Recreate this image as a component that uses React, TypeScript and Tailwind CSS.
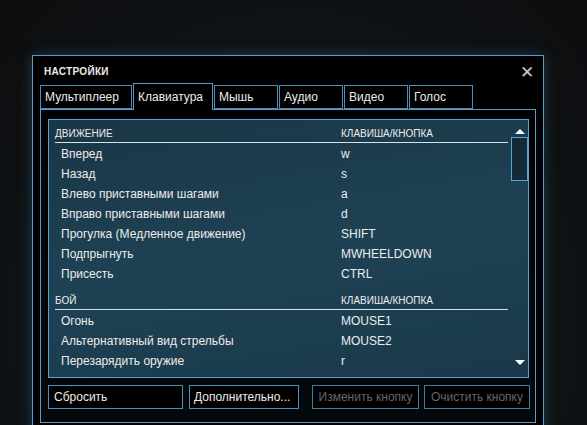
import React from 'react';

const tabs = [
  { label: 'Мультиплеер', w: 'w-[92px]' },
  { label: 'Клавиатура', w: 'w-[80px]', active: true },
  { label: 'Мышь', w: 'w-[64px]' },
  { label: 'Аудио', w: 'w-[64px]' },
  { label: 'Видео', w: 'w-[64px]' },
  { label: 'Голос', w: 'w-[64px]' },
];

const sections = [
  {
    title: 'ДВИЖЕНИЕ',
    rows: [
      ['Вперед', 'w'],
      ['Назад', 's'],
      ['Влево приставными шагами', 'a'],
      ['Вправо приставными шагами', 'd'],
      ['Прогулка (Медленное движение)', 'SHIFT'],
      ['Подпрыгнуть', 'MWHEELDOWN'],
      ['Присесть', 'CTRL'],
    ],
  },
  {
    title: 'БОЙ',
    rows: [
      ['Огонь', 'MOUSE1'],
      ['Альтернативный вид стрельбы', 'MOUSE2'],
      ['Перезарядить оружие', 'r'],
    ],
  },
];

export default function App() {
  return (
    <div
      className="w-[587px] h-[425px] overflow-hidden pt-[55px] pl-[32px] bg-[radial-gradient(ellipse_at_50%_75%,#1c2d36_0%,#101417_55%,#0c0d0f_100%)] text-[#ececec]"
      style={{ fontFamily: '"Liberation Sans", Arial, sans-serif' }}
    >
      {/* Окно настроек */}
      <div className="w-[512px] h-[380px] border border-[#5b9cc6] bg-black shadow-[0_0_12px_rgba(60,130,170,0.35)]">
        {/* Заголовок */}
        <div className="h-[27px] flex items-end justify-between pl-[11px] pr-[9px]">
          <span className="text-[10px] font-bold tracking-[0.3px] leading-none pb-[6px]">НАСТРОЙКИ</span>
          <span className="text-[#c8c8c8] text-[17px] leading-none pb-[2px]">✕</span>
        </div>

        {/* Вкладки */}
        <div className="flex items-end gap-[1px] pl-[7px] h-[26px]">
          {tabs.map((t) =>
            t.active ? (
              <div
                key={t.label}
                className={`${t.w} h-[27px] -mb-px relative z-10 border border-b-0 border-[#5b9cc6] bg-black text-[12px] pl-[4px] pt-[4px]`}
              >
                {t.label}
              </div>
            ) : (
              <div
                key={t.label}
                className={`${t.w} h-[24px] border border-[#4d90bc] bg-black text-[12px] pl-[4px] pt-[2px]`}
              >
                {t.label}
              </div>
            )
          )}
        </div>

        {/* Панель вкладки */}
        <div className="ml-[7px] w-[496px] h-[314px] border border-[#5b9cc6] bg-[linear-gradient(180deg,#000000,#05090c)] pt-[9px] pl-[7px]">
          {/* Список */}
          <div className="w-[481px] h-[259px] border border-[#5aa3cf] bg-[linear-gradient(170deg,#1a3646_0%,#1e4254_50%,#1a394a_100%)] flex overflow-hidden">
            <div className="flex-1 pl-[6px]">
              {sections.map((s, i) => (
                <div key={s.title}>
                  <div
                    className={`${i === 0 ? 'h-[23px]' : 'h-[27px]'} flex items-end border-b border-[#d4e2ea] text-[10px] leading-none pb-[3px] mr-[3px]`}
                  >
                    <span className="w-[286px]">{s.title}</span>
                    <span>КЛАВИША/КНОПКА</span>
                  </div>
                  {s.rows.map(([a, k]) => (
                    <div key={a} className="h-[20px] flex items-center text-[12px] pt-[1px]">
                      <span className="w-[286px] pl-[6px]">{a}</span>
                      <span>{k}</span>
                    </div>
                  ))}
                </div>
              ))}
            </div>

            {/* Полоса прокрутки */}
            <div className="w-[17px] flex flex-col items-center">
              <div className="h-[17px] flex items-end pb-[3px]">
                <div className="w-0 h-0 border-l-[5px] border-r-[5px] border-b-[5px] border-l-transparent border-r-transparent border-b-white" />
              </div>
              <div className="w-[17px] h-[44px] border border-[#5aa3cf] bg-[#132b38]" />
              <div className="flex-1" />
              <div className="h-[17px] flex items-start pt-[3px] mb-[3px]">
                <div className="w-0 h-0 border-l-[5px] border-r-[5px] border-t-[5px] border-l-transparent border-r-transparent border-t-white" />
              </div>
            </div>
          </div>

          {/* Кнопки */}
          <div className="flex mt-[7px] text-[12px]">
            <button className="w-[135px] h-[24px] border border-[#4d90bc] bg-black text-left pl-[5px] text-[#ececec]">
              Сбросить
            </button>
            <button className="ml-[6px] w-[110px] h-[24px] border border-[#4d90bc] bg-black text-left pl-[4px] text-[#ececec]">
              Дополнительно...
            </button>
            <button className="ml-[13px] w-[107px] h-[24px] border border-[#3f7ea6] bg-black text-[#62676b]">
              Изменить кнопку
            </button>
            <button className="ml-[5px] w-[106px] h-[24px] border border-[#3f7ea6] bg-black text-[#62676b]">
              Очистить кнопку
            </button>
          </div>
        </div>
      </div>
    </div>
  );
}
